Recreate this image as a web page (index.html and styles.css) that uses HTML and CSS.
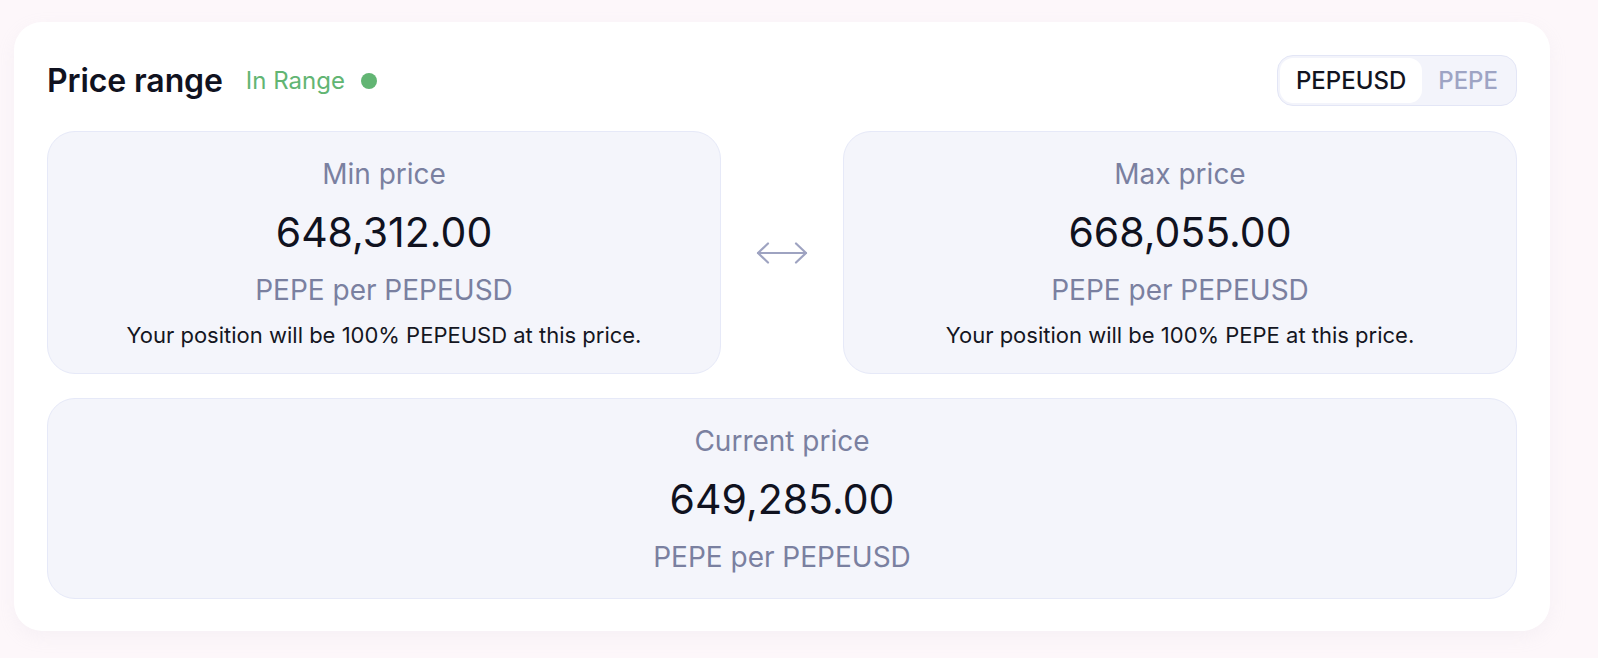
FILE: index.html
```html
<!DOCTYPE html>
<html lang="en">
<head>
<meta charset="utf-8">
<title>Price range</title>
<link rel="stylesheet" href="styles.css">
</head>
<body>
<section class="panel">
  <header class="panel-head">
    <div class="head-left">
      <h2 class="title">Price range</h2>
      <span class="status">In Range</span>
      <span class="status-dot"></span>
    </div>
    <div class="toggle">
      <button class="toggle-btn active">PEPEUSD</button>
      <button class="toggle-btn">PEPE</button>
    </div>
  </header>
  <div class="range-row">
    <div class="price-card">
      <div class="label">Min price</div>
      <div class="value">648,312.00</div>
      <div class="unit">PEPE per PEPEUSD</div>
      <div class="note">Your position will be 100% PEPEUSD at this price.</div>
    </div>
    <div class="arrow">
      <svg width="52" height="22" viewBox="0 0 52 22" fill="none" stroke="#9ea3c1" stroke-width="2.2" stroke-linecap="round" stroke-linejoin="round">
        <path d="M2 11 H50"/>
        <path d="M12 1.5 L2 11 L12 20.5"/>
        <path d="M40 1.5 L50 11 L40 20.5"/>
      </svg>
    </div>
    <div class="price-card">
      <div class="label">Max price</div>
      <div class="value">668,055.00</div>
      <div class="unit">PEPE per PEPEUSD</div>
      <div class="note">Your position will be 100% PEPE at this price.</div>
    </div>
  </div>
  <div class="price-card current">
    <div class="label">Current price</div>
    <div class="value">649,285.00</div>
    <div class="unit">PEPE per PEPEUSD</div>
  </div>
</section>
</body>
</html>
```

FILE: styles.css
```css
* { box-sizing: border-box; }

html, body {
  margin: 0;
  background: #fdf7fa;
}

body {
  padding: 22px 48px 0 14px;
  font-family: Inter, "Noto Sans", sans-serif;
  min-height: 658px;
}

.panel {
  background: #ffffff;
  border-radius: 28px;
  padding: 33px 33px 32px;
  box-shadow: 0 6px 18px rgba(200, 195, 215, 0.12);
}

.panel-head {
  display: flex;
  align-items: center;
  justify-content: space-between;
  margin-bottom: 25px;
}

.head-left {
  display: flex;
  align-items: center;
}

.title {
  margin: 0;
  font-size: 32px;
  font-weight: 600;
  color: #10121f;
  line-height: 40px;
  letter-spacing: -0.1px;
}

.status {
  margin-left: 23px;
  font-size: 24px;
  color: #62b573;
  line-height: 30px;
}

.status-dot {
  width: 16px;
  height: 16px;
  border-radius: 50%;
  background: #62b573;
  margin-left: 16px;
}

.toggle {
  display: flex;
  padding: 2px;
  border: 1.5px solid #e3e6f6;
  border-radius: 16px;
  background: #f3f4fb;
}

.toggle-btn {
  font-family: inherit;
  font-size: 24px;
  font-weight: 500;
  height: 45px;
  padding: 0 16px;
  border: 0;
  border-radius: 13px;
  background: transparent;
  color: #9ea4c4;
  cursor: pointer;
}

.toggle-btn.active {
  background: #ffffff;
  color: #12141f;
}

.range-row {
  display: grid;
  grid-template-columns: 1fr 122px 1fr;
  margin-bottom: 24px;
}

.arrow {
  display: flex;
  align-items: center;
  justify-content: center;
}

.price-card {
  display: flex;
  flex-direction: column;
  align-items: center;
  text-align: center;
  background: #f4f5fb;
  border: 1.5px solid #e6e9f8;
  border-radius: 28px;
  padding: 25px 20px 24px;
}

.label {
  font-size: 28px;
  line-height: 34px;
  color: #7a80a0;
}

.value {
  margin-top: 17px;
  font-size: 41px;
  line-height: 48px;
  font-weight: 400;
  color: #10121f;
}

.unit {
  margin-top: 17px;
  font-size: 28px;
  line-height: 34px;
  color: #7a80a0;
}

.note {
  margin-top: 15px;
  font-size: 22px;
  line-height: 27px;
  color: #141622;
}
```
